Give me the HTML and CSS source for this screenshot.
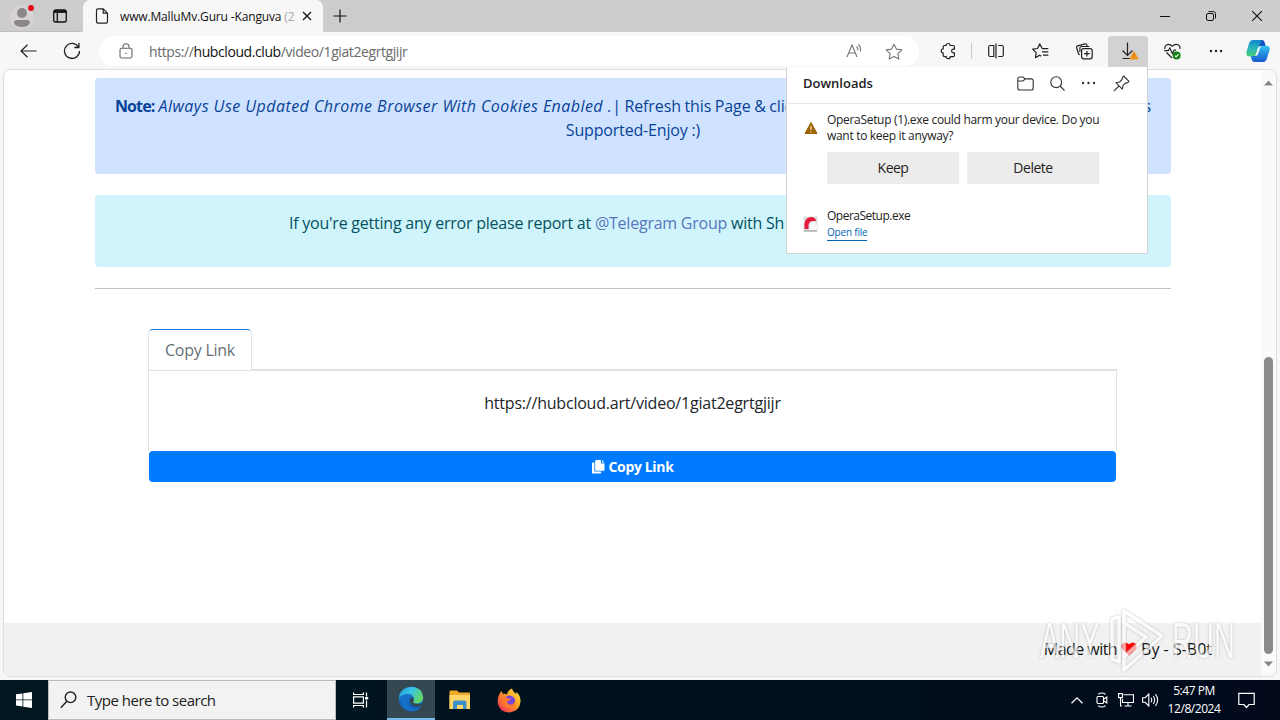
FILE: index.html
```html
<!DOCTYPE html>
<html lang="en">
<head>
  <meta charset="UTF-8">
  <meta name="viewport" content="width=device-width, initial-scale=1.0">
  <title>www.MalluMv.Guru -Kanguva</title>
  <link rel="stylesheet" href="styles.css">
</head>
<body>
  <!-- Tabs -->
  <div class="tabstrip">
    <div class="strip-left">
      <svg class="avatar" width="26" height="28" viewBox="0 0 26 28"><circle cx="13" cy="15" r="12" fill="#d6d3d2"/><circle cx="13" cy="11" r="5" fill="#8b8786"/><path d="M5 21q0-3 3-3h10q3 0 3 3-2 4-8 4t-8-4z" fill="#8b8786"/><circle cx="22" cy="6" r="3" fill="#e00b1c"/></svg>
      <svg class="workspaces" width="16" height="16" viewBox="0 0 16 16" fill="none" stroke="#111" stroke-width="1.3"><rect x="1.7" y="2" width="12.6" height="12" rx="2"/><path d="M5.3 5v9M2 4h12" /><path d="M2 3.4h12" stroke-width="2.2"/></svg>
    </div>
    <div class="tab">
      <svg width="14" height="16" viewBox="0 0 14 16" fill="none" stroke="#222" stroke-width="1.2"><path d="M1.5 2.2q0-1.4 1.4-1.4h5.3l4.3 4.4v8.6q0 1.4-1.4 1.4H2.9q-1.4 0-1.4-1.4zM8.2 1v4.2h4.3"/></svg>
      <span class="tab-title">www.MalluMv.Guru -Kanguva <i>(2</i></span>
      <svg class="tab-close" width="10" height="10" viewBox="0 0 10 10" stroke="#111" stroke-width="1.3"><path d="M1 1l8 8M9 1L1 9"/></svg>
    </div>
    <svg class="plus" width="14" height="14" viewBox="0 0 14 14" stroke="#111" stroke-width="1.2"><path d="M7 .5v13M.5 7h13"/></svg>
    <div class="window-buttons">
      <span><svg width="10" height="10" viewBox="0 0 10 10" stroke="#111"><path d="M0 5.5h10"/></svg></span>
      <span><svg width="10" height="10" viewBox="0 0 10 10" fill="none" stroke="#111"><rect x=".5" y="2.5" width="7" height="7" rx="1.5"/><path d="M2.5.6h4.8q2.2 0 2.2 2.2v4.7"/></svg></span>
      <span><svg width="10" height="10" viewBox="0 0 10 10" stroke="#111" stroke-width="1.1"><path d="M0 0l10 10M10 0L0 10"/></svg></span>
    </div>
  </div>

  <!-- Toolbar -->
  <div class="toolbar">
    <svg class="back" width="17" height="14" viewBox="0 0 17 14" fill="none" stroke="#222" stroke-width="1.2"><path d="M16.5 7H1.2M7.5.7L1 7l6.5 6.3"/></svg>
    <svg class="reload" width="18" height="18" viewBox="0 0 18 18" fill="none" stroke="#222" stroke-width="1.3"><path d="M15.5 5.2A7.5 7.5 0 1 0 16.5 9M15.9 1v4.5h-4.6"/></svg>
    <div class="address">
      <svg width="14" height="16" viewBox="0 0 14 16" fill="none" stroke="#666" stroke-width="1.1"><rect x="1" y="5.3" width="12" height="9.7" rx="1.8"/><path d="M4 5V3.8a3 3 0 0 1 6 0V5"/><circle cx="7" cy="10.2" r=".8" fill="#666" stroke="none"/></svg>
      <span class="url">https://<b>hubcloud.club</b>/video/1giat2egrtgjijr</span>
      <svg class="read" width="17" height="16" viewBox="0 0 17 16" fill="none" stroke="#777" stroke-width="1.1"><path d="M1 14L6 2l5 12M2.7 10h6.6M10.5 3.5q1.700 1.700 1.400 4M12.400 1.500q2.800 2.800 2 7"/></svg>
      <svg width="18" height="17" viewBox="0 0 18 17" fill="none" stroke="#777" stroke-width="1.1" stroke-linejoin="round"><path d="M9 1.200l2.400 4.900 5.400.8-3.900 3.800.9 5.400L9 13.600l-4.800 2.500.9-5.400L1.200 6.900l5.400-.8z"/></svg>
    </div>
    <div class="tools">
      <span class="tool"><svg width="17" height="18" viewBox="0 0 17 18" fill="none" stroke="#222" stroke-width="1.2" stroke-linejoin="round"><path d="M6.200 3.500a2 2 0 0 1 4 0h3q1.200 0 1.200 1.200v2.500h-1a1.800 1.800 0 0 0 0 3.600h1v2.700q0 1.200-1.200 1.200h-3a2 2 0 0 1-4 0H4.400q-1.200 0-1.200-1.200v-2.600a2 2 0 0 1 0-4V4.700q0-1.200 1.200-1.200z"/></svg></span>
      <i class="divider"></i>
      <span class="tool"><svg width="16" height="16" viewBox="0 0 16 16" fill="none" stroke="#222" stroke-width="1.2"><path d="M5.800 2.500H2.200q-1.500 0-1.500 1.500v8q0 1.500 1.500 1.500h3.600zM10.200 2.500h3.600q1.500 0 1.500 1.500v8q0 1.500-1.500 1.500h-3.600M8 .5v15"/></svg></span>
      <span class="tool"><svg width="17" height="16" viewBox="0 0 17 16" fill="none" stroke="#222" stroke-width="1.200" stroke-linejoin="round"><path d="M10 5.300L7.700.9 5.500 5.500.7 6.200l3.500 3.400-.8 5 4.300-2.300 1.500.8M9.800 5.700h6.500M10 8.900h6.300M11 12.100h5.300"/></svg></span>
      <span class="tool"><svg width="17" height="17" viewBox="0 0 17 17" fill="none" stroke="#222" stroke-width="1.200"><rect x="5.600" y="5.600" width="10.600" height="10.200" rx="2"/><path d="M10.900 8v5.500M8.100 10.700h5.600M3.800 11.700L2.600 11l-2-6.200Q.3 3.300 1.700 2.800L9 .8q1.300-.2 1.800 1l.4 1.500M3.900 9V5q0-1.500 1.500-1.500h8"/></svg></span>
      <span class="tool active"><svg width="20" height="20" viewBox="0 0 20 20" fill="none" stroke="#222" stroke-width="1.200"><path d="M8.500 1.500v13M3.500 9.500l5 5 5-5M3.500 17.500h8"/><path d="M15 11l4 7h-8z" fill="#f5951c" stroke="#f5951c" stroke-linejoin="round"/><path d="M15 13v2.500M15 16.500v1" stroke="#b87413" stroke-width="1"/></svg></span>
      <span class="tool"><svg width="17" height="17" viewBox="0 0 17 17" fill="none" stroke="#222" stroke-width="1.200"><path d="M1 6C0 2 4.500-.5 8.300 3.200 12-.5 17 2 15.800 6M.3 7.700h4l1.500-2.700 2.500 5.500 1.800-3.300h2M2.500 9.500L8 15"/><circle cx="12.600" cy="12.600" r="4" fill="#108010" stroke="none"/><path d="M10.800 12.700l1.300 1.300 2.400-2.700" stroke="#fff"/></svg></span>
      <span class="tool"><svg width="14" height="4" viewBox="0 0 14 4" fill="#222"><circle cx="2" cy="2" r="1.200"/><circle cx="7" cy="2" r="1.200"/><circle cx="12" cy="2" r="1.200"/></svg></span>
      <span class="tool copilot"><svg width="24" height="24" viewBox="0 0 24 24">
        <defs>
          <linearGradient id="cpA" x1="0" y1="0" x2="0" y2="1"><stop offset="0" stop-color="#1386cf"/><stop offset=".5" stop-color="#28b6bb"/><stop offset="1" stop-color="#49cf72"/></linearGradient>
          <linearGradient id="cpB" x1="0" y1="0" x2="0" y2="1"><stop offset="0" stop-color="#36c3ef"/><stop offset="1" stop-color="#1657d0"/></linearGradient>
        </defs>
        <path d="M7 1h9q2 0 3 4l.5 2h-5q-2 0-2.600 2L10 15q-.7 2.500-3 2.500H4Q-.5 17.500.6 12.500L3 4.500Q4 1 7 1z" fill="url(#cpA)"/>
        <path d="M16 1q2 0 3 4l.5 2h-5q-2 0-2.500 2z" fill="#154fc0"/>
        <path d="M17 23H9q-3 0-3.500-3L5 17h4q2.500 0 3-2l2-6q.8-2.300 3-2.300h3.500q4 0 3 4.500L21 19q-1 4-4 4z" fill="url(#cpB)"/>
      </svg></span>
    </div>
  </div>

  <!-- Page -->
  <div class="viewport">
    <div class="page">
      <div class="main">
        <div class="alert alert-primary">
          <div class="note-line"><span><b>Note:</b> <em>Always Use Updated Chrome Browser With Cookies Enabled .</em><span class="note-rest">| Refresh this Page &amp; click</span></span><span>s</span></div>
          <div class="note-end">Supported-Enjoy :)</div>
        </div>
        <div class="alert alert-info"><span class="report">If you're getting any error please report at</span> <a>@Telegram Group</a> <span>with Sh</span></div>
        <hr>
        <div class="card">
          <div class="card-tabs"><span class="card-tab">Copy Link</span></div>
          <div class="card-body">https://hubcloud.art/video/1giat2egrtgjijr</div>
          <button class="copy-btn"><svg width="13" height="14" viewBox="0 0 13 14" fill="#fff"><path d="M4 0h5v3.500h3.500V10q0 .8-.8.8H4q-.8 0-.8-.8V.8Q3.200 0 4 0zM10 0l2.500 2.500H10zM.8 2.500h1.600v8.300q0 .8.800.8h6v1.200q0 .8-.8.800H.8q-.8 0-.8-.8V3.300q0-.8.800-.8z"/></svg><span>Copy Link</span></button>
        </div>
      </div>
      <div class="footer"><span class="made">Made with</span><svg width="16" height="14" viewBox="0 0 16 14"><path d="M8 13.500L1.500 7.200Q-.5 4.500 1 2.200 3.500-1 8 2.300 12.500-1 15 2.200q1.500 2.300-.5 5z" fill="#f00"/></svg><span>By - S-B0t</span></div>
    </div>
    <div class="scrollbar">
      <svg width="9" height="6" viewBox="0 0 9 6"><path d="M4.500.5L9 5.500H0z" fill="#858585"/></svg>
      <div class="thumb"></div>
      <svg width="9" height="6" viewBox="0 0 9 6"><path d="M4.500 5.500L0 .5h9z" fill="#858585"/></svg>
    </div>
  </div>

  <!-- Taskbar -->
  <div class="taskbar">
    <span class="start"><svg width="16" height="16" viewBox="0 0 16 16" fill="#fff"><path d="M0 2.300l6.500-.9v6.100H0zM7.300 1.300L16 0v7.500H7.300zM0 8.300h6.500v6.200L0 13.600zM7.300 8.300H16V16l-8.700-1.300z"/></svg></span>
    <div class="search"><svg width="17" height="18" viewBox="0 0 17 18" fill="none" stroke="#222" stroke-width="1.400"><circle cx="10.500" cy="6.300" r="5.300"/><path d="M6.800 10.200L.8 16.800"/></svg><span>Type here to search</span></div>
    <span class="app"><svg width="18" height="16" viewBox="0 0 18 16" fill="none" stroke="#fff" stroke-width="1.200"><path d="M1.600.5v2h9.800v-2M1.600 15.500v-2h9.800v2M1.600 4.800h9.800v6.400H1.600zM14.500.5v4M14.500 8.500v7"/><path d="M13 5h3.200v2.500H13z" fill="#fff" stroke="none"/></svg></span>
    <span class="app app-on"><svg width="26" height="26" viewBox="0 0 26 26">
      <defs>
        <linearGradient id="edA" x1="0" y1="0" x2="1" y2=".5"><stop offset="0" stop-color="#289bd8"/><stop offset=".5" stop-color="#37c3e5"/><stop offset="1" stop-color="#62d665"/></linearGradient>
        <linearGradient id="edB" x1="0" y1="0" x2="0" y2="1"><stop offset="0" stop-color="#1b86d3"/><stop offset="1" stop-color="#1155b0"/></linearGradient>
      </defs>
      <circle cx="13" cy="13" r="12.200" fill="url(#edB)"/>
      <path d="M1 12Q2 2 13 .8 24 1 25.200 11.500 25 17 19 17.500q-4.500 0-4-2 2-2 .5-4.500Q13 6.500 7.500 8 2.500 9.500 1 12z" fill="url(#edA)"/>
      <path d="M10.500 10.500Q8 13 9 17q2.500 5.500 9 5.500 3 0 5-1.500Q18 27 10 24.800 2 21 4 14q2.500-4 6.500-3.500z" fill="#1670c6"/>
      <path d="M13.500 11Q11 13 12 16.500q2.500 4.500 8 4 2-.5 3.500-1.500l2 1.500V17q-1.500 1.300-5.500 1-4 0-5-2 2-2-1.500-5z" fill="#334850"/>
    </svg></span>
    <span class="app"><svg width="22" height="20" viewBox="0 0 22 20"><path d="M.5 1.500q0-1 1-1h6.500l2 2H20q1 0 1 1V19H.5z" fill="#f0a928"/><path d="M.5 5h20.500v14H.5z" fill="#ffd667"/><path d="M4 19v-6.500q0-2 2-2h9.500q2 0 2 2V19h-3.500v-4h-6v4z" fill="#3d91c8"/></svg></span>
    <span class="app"><svg width="24" height="25" viewBox="0 0 24 25">
      <defs><linearGradient id="fx" x1="1" y1="0" x2="0" y2="1"><stop offset="0" stop-color="#fff04a"/><stop offset=".45" stop-color="#ff9a22"/><stop offset="1" stop-color="#f2205f"/></linearGradient></defs>
      <path d="M4.500 3l1.500 3q2.500-.5 4 .5Q11 2 15 .5q.5 3 4 5.500l.5-2Q24 8 23.500 14 22.500 23.500 12.500 24.500 1.500 24 .7 14 .5 7.500 4.500 3z" fill="url(#fx)"/>
      <circle cx="12.500" cy="13" r="5.600" fill="#7646d9"/><path d="M5 8q4 .5 6 2.500h3q-.5 2-4 3 .5 3.500 4.500 3 3-.5 3.500-4 1.500 7-5.500 7.500Q5.500 20 5 13z" fill="#ff7a2e"/>
    </svg></span>
    <div class="tray">
      <svg width="12" height="7" viewBox="0 0 12 7" fill="none" stroke="#fff" stroke-width="1.200"><path d="M.5 6.300L6 .9l5.500 5.400"/></svg>
      <svg class="meet" width="12" height="16" viewBox="0 0 12 16" fill="none" stroke="#fff" stroke-width="1.100"><rect x="1" y="4.500" width="6.500" height="7" rx="1"/><path d="M7.500 7.200L10.800 5v6L7.500 8.800M2.200 2.300Q6-.3 9.500 2.300M2.200 13.700q3.800 2.600 7.300 0"/></svg>
      <svg class="net" width="16" height="14" viewBox="0 0 16 14" fill="none" stroke="#fff" stroke-width="1.100"><path d="M5.500 1.800h10v7.700H4.500V6M10 9.500v3.500M6.500 13h7M.6.600h3.800v4H.6zM2.500 4.600V13H4"/></svg>
      <svg class="sound" width="17" height="14" viewBox="0 0 17 14" fill="none" stroke="#fff" stroke-width="1.100"><path d="M.6 4.700h2.600L6.800 1v12L3.200 9.300H.6zM9 4.700q1.500 2.300 0 4.600M11.300 3q2.700 4 0 8M13.500 1.200q4.300 5.800 0 11.600"/></svg>
      <div class="clock"><div>5:47 PM</div><div>12/8/2024</div></div>
      <svg class="notify" width="17" height="17" viewBox="0 0 17 17" fill="none" stroke="#fff" stroke-width="1.200"><path d="M.8 1.300h15.400v11.200h-5.200L8.500 15.500 6 12.500H.8z"/></svg>
    </div>
  </div>

  <!-- Downloads flyout -->
  <div class="downloads">
    <div class="dl-head">
      <b>Downloads</b>
      <svg width="17" height="15" viewBox="0 0 17 15" fill="none" stroke="#333" stroke-width="1.100"><path d="M.8 3q0-2 2-2h2.700q.8 0 1.300.6l1.200 1.300h6.200q2 0 2 2V12q0 2-2 2H2.800q-2 0-2-2zM.8 5h4.700q.7 0 1.200-.6L8 2.900"/></svg>
      <svg width="15" height="15" viewBox="0 0 15 15" fill="none" stroke="#333" stroke-width="1.100"><circle cx="6.200" cy="6.200" r="5.400"/><path d="M10 10l4.500 4.500"/></svg>
      <svg width="15" height="4" viewBox="0 0 15 4" fill="#333"><circle cx="2" cy="2" r="1.200"/><circle cx="7.500" cy="2" r="1.200"/><circle cx="13" cy="2" r="1.200"/></svg>
      <svg width="17" height="17" viewBox="0 0 17 17" fill="none" stroke="#333" stroke-width="1.100" stroke-linejoin="round"><path d="M10.600 1l5.400 5.400-1.300 1.200-2.300.5-2.400 2.300-.7 3.800-6.500-6.500 3.800-.7 2.300-2.400.5-2.300zM6 11L.8 16.200"/></svg>
    </div>
    <div class="dl-item">
      <svg width="14" height="14" viewBox="0 0 14 14"><path d="M7 1.500L13 12.500H1z" fill="#9c6100" stroke="#9c6100" stroke-linejoin="round"/><path d="M7 5v4M7 10.200v1.300" stroke="#ffe0a8" stroke-width="1.300"/></svg>
      <div>
        <div class="dl-text">OperaSetup (1).exe could harm your device. Do you<br>want to keep it anyway?</div>
        <div class="dl-buttons"><button>Keep</button><button>Delete</button></div>
      </div>
    </div>
    <div class="dl-item dl-done">
      <svg width="15" height="16" viewBox="0 0 15 16"><rect x=".5" y=".5" width="14" height="15" rx="1" fill="#dcdcdc"/><path d="M1.500 13V8q.5-6.500 6.500-7 4.500 0 5 4H9.500Q6 5.500 5.500 9v4z" fill="#e51937"/><path d="M6.500 14V9Q7 5.500 10 5.500t4 3.500v5z" fill="#f7f7f7"/><path d="M1 15h13" stroke="#999"/></svg>
      <div>
        <div class="dl-name">OperaSetup.exe</div>
        <a class="dl-open">Open file</a>
      </div>
    </div>
  </div>

  <!-- Watermark -->
  <div class="watermark">
    <span class="mark-word">ANY</span>
    <svg width="58" height="66" viewBox="0 0 58 66" fill="none" stroke="#fff" stroke-width="3.500" stroke-linejoin="round"><path d="M16 3l38 25-38 34V49l22-20-22-14zM16 15v34M11 9L4 11v40l7 3z"/></svg>
    <span class="mark-word">RUN</span>
  </div>
</body>
</html>
```
FILE: styles.css
```css
* {
  box-sizing: border-box;
}
body {
  margin: 0;
  width: 1280px;
  height: 720px;
  overflow: hidden;
  display: flex;
  flex-direction: column;
  background: #f7f7f7;
  font-family: "Open Sans", "Noto Sans", sans-serif;
  font-size: 12px;
  color: #222;
}
svg {
  display: block;
  flex: none;
}
button {
  border: 0;
  font: inherit;
}
/* Tabs */
.tabstrip {
  height: 32px;
  flex: none;
  display: flex;
  background: #cdcdcd;
}
.strip-left {
  width: 83px;
  display: flex;
  align-items: center;
  padding-left: 9px;
  gap: 17px;
  border-bottom: 1px solid #bdbdbd;
  border-bottom-right-radius: 5px;
}
.tab {
  width: 240px;
  display: flex;
  align-items: center;
  padding: 0 11px 0 12px;
  background: #f7f7f7;
  border-radius: 7px 7px 0 0;
}
.tab-title {
  width: 174px;
  margin-left: 11px;
  white-space: nowrap;
  overflow: hidden;
  color: #111;
  letter-spacing: -0.15px;
}
.tab-title i {
  font-style: normal;
  color: #aaa;
}
.tab-close {
  margin-left: 8px;
}
.plus {
  margin: 9px 0 0 10px;
}
.window-buttons {
  display: flex;
  margin-left: auto;
}
.window-buttons span {
  width: 46px;
  display: flex;
  align-items: center;
  justify-content: center;
}
/* Toolbar */
.toolbar {
  height: 37px;
  flex: none;
  display: flex;
  align-items: center;
  padding: 1px 2px 0 20px;
}
.reload {
  margin-left: 26px;
}
.address {
  width: 820px;
  height: 30px;
  margin-left: 18px;
  padding: 0 16px 0 20px;
  display: flex;
  align-items: center;
  background: #fff;
  border-radius: 15px;
}
.url {
  margin-left: 16px;
  font-size: 14px;
  color: #6a6a6a;
  letter-spacing: -0.41px;
}
.url b {
  font-weight: normal;
  color: #111;
}
.read {
  margin: 0 22px 0 auto;
}
.tools {
  display: flex;
  align-items: center;
  margin-left: auto;
}
.tool {
  width: 44px;
  height: 31px;
  display: flex;
  align-items: center;
  justify-content: center;
}
.tool.active {
  width: 40px;
  margin: 0 2px;
  padding-left: 2px;
  background: #d2d2d2;
  border-radius: 4px 4px 0 0;
}
.tool.copilot {
  width: 40px;
}
.divider {
  width: 1px;
  height: 16px;
  margin: 0 2px 0 1px;
  background: #ccc;
}
/* Page */
.viewport {
  height: 608px;
  margin: 0 3px;
  flex: none;
  display: flex;
  background: #fff;
  border: 1px solid #dedede;
  border-radius: 8px;
  overflow: hidden;
}
.page {
  width: 1257px;
  display: flex;
  flex-direction: column;
  font-size: 16px;
  line-height: 24px;
}
.main {
  flex: 1;
  padding: 8px 90px 0 91px;
}
.alert {
  border-radius: 4px;
  white-space: nowrap;
}
.alert-primary {
  height: 96px;
  padding: 16px 20px;
  color: #084298;
  background: #cfe2ff;
}
.note-line {
  display: flex;
  justify-content: space-between;
}
.note-line b {
  letter-spacing: -0.9px;
}
.note-line em {
  letter-spacing: 0.45px;
}
.note-rest {
  letter-spacing: -0.1px;
  word-spacing: -0.5px;
}
.note-end {
  text-align: center;
  letter-spacing: -0.17px;
}
.alert-info {
  height: 72px;
  margin-top: 21px;
  padding: 16px 0 0 194px;
  color: #055160;
  background: #cff4fc;
  letter-spacing: -0.23px;
}
.alert-info a {
  color: #5b75bd;
}
hr {
  height: 1px;
  margin: 21px 0 0;
  border: 0;
  background: #c2c2c2;
}
.card {
  margin: 40px 54px 0 53px;
  border-radius: 5px;
}
.card-tabs {
  height: 42px;
  display: flex;
  border-bottom: 2px solid #dee2e6;
}
.card-tab {
  width: 104px;
  height: 42px;
  padding: 8px 0 0 16px;
  color: #686f76;
  background: #fff;
  border: 1px solid #dee2e6;
  border-top-color: #1b7bdc;
  border-radius: 5px 5px 0 0;
  letter-spacing: -0.25px;
}
.card-body {
  height: 80px;
  padding-top: 20px;
  text-align: center;
  color: #212529;
  border: 1px solid #dee2e6;
  border-width: 0 1px;
  letter-spacing: -0.21px;
}
.copy-btn {
  display: flex;
  width: 967px;
  height: 31px;
  margin-left: 1px;
  padding: 0;
  align-items: center;
  justify-content: center;
  gap: 4px;
  color: #fff;
  background: #007bff;
  border-radius: 4px;
  font-size: 14px;
  font-weight: bold;
  letter-spacing: -0.35px;
}
.footer {
  height: 53px;
  padding: 0 49px 2px 0;
  display: flex;
  align-items: center;
  justify-content: flex-end;
  gap: 4px;
  color: #111;
  background: #f1f1f1;
}
.made {
  letter-spacing: -0.55px;
}
.scrollbar {
  flex: 1;
  display: flex;
  flex-direction: column;
  align-items: center;
  padding: 10px 0 9px;
  background: #fafafa;
}
.thumb {
  width: 9px;
  height: 297px;
  margin: auto 0 7px;
  background: #8b8b8b;
  border-radius: 5px;
}
/* Taskbar */
.taskbar {
  height: 40px;
  margin-top: 3px;
  flex: none;
  display: flex;
  background: linear-gradient(90deg, #001720, #01101e 60%, #020a1c);
}
.start {
  width: 48px;
  display: flex;
  align-items: center;
  justify-content: center;
}
.search {
  width: 288px;
  display: flex;
  align-items: center;
  padding-left: 11px;
  gap: 10px;
  background: #f2f2f2;
  border: 1px solid #bbb;
  font-size: 15px;
  letter-spacing: -0.5px;
}
.app {
  width: 49px;
  display: flex;
  align-items: center;
  justify-content: center;
}
.app:nth-of-type(2) {
  width: 51px;
  padding-right: 2px;
}
.app-on {
  width: 48px;
  background: #334850;
  border-bottom: 2px solid #76b9ed;
}
.tray {
  margin-left: auto;
  padding-right: 25px;
  display: flex;
  align-items: center;
  color: #fff;
}
.meet {
  margin-left: 13px;
}
.net {
  margin-left: 10px;
}
.sound {
  margin-left: 8px;
}
.clock {
  width: 68px;
  margin-left: 1px;
  text-align: center;
  line-height: 18px;
  letter-spacing: -0.45px;
}
.notify {
  margin-left: 10px;
}
/* Downloads flyout */
.downloads {
  position: absolute;
  top: 67px;
  left: 786px;
  width: 362px;
  height: 187px;
  background: #fff;
  border: 1px solid #d4d4d4;
  border-top: 0;
}
.dl-head {
  height: 37px;
  display: flex;
  align-items: center;
  gap: 16px;
  padding: 0 17px 4px 16px;
  border-bottom: 1px solid #e8e8e8;
}
.dl-head svg:last-child {
  margin-left: 1px;
}
.dl-head b {
  margin-right: auto;
  font-size: 13px;
  font-weight: 600;
}
.dl-item {
  display: flex;
  gap: 9px;
  padding: 8px 0 0 17px;
  line-height: 16px;
}
.dl-item > svg {
  margin-top: 9px;
}
.dl-text {
  white-space: nowrap;
  letter-spacing: -0.31px;
}
.dl-buttons {
  display: flex;
  gap: 8px;
  margin-top: 8px;
}
.dl-buttons button {
  width: 132px;
  height: 32px;
  padding: 0;
  background: #ececec;
  color: #222;
  font-size: 14px;
  letter-spacing: -0.5px;
}
.dl-done {
  padding: 24px 0 0 16px;
}
.dl-done > svg {
  margin: 8px 0 0;
}
.dl-name {
  letter-spacing: -0.5px;
}
.dl-open {
  display: inline-block;
  height: 17px;
  border-bottom: 1px solid #0067b8;
  color: #0067b8;
  font-size: 10px;
  letter-spacing: -0.2px;
}
/* Watermark */
.watermark {
  position: absolute;
  top: 608px;
  left: 1040px;
  height: 66px;
  display: flex;
  align-items: center;
  gap: 6px;
  color: #fff;
  opacity: 0.65;
  font: 50px "Liberation Sans", sans-serif;
  filter: drop-shadow(0 0 1px #999);
}
.mark-word {
  width: 62px;
  transform: scaleX(0.58);
  transform-origin: left center;
}
```
